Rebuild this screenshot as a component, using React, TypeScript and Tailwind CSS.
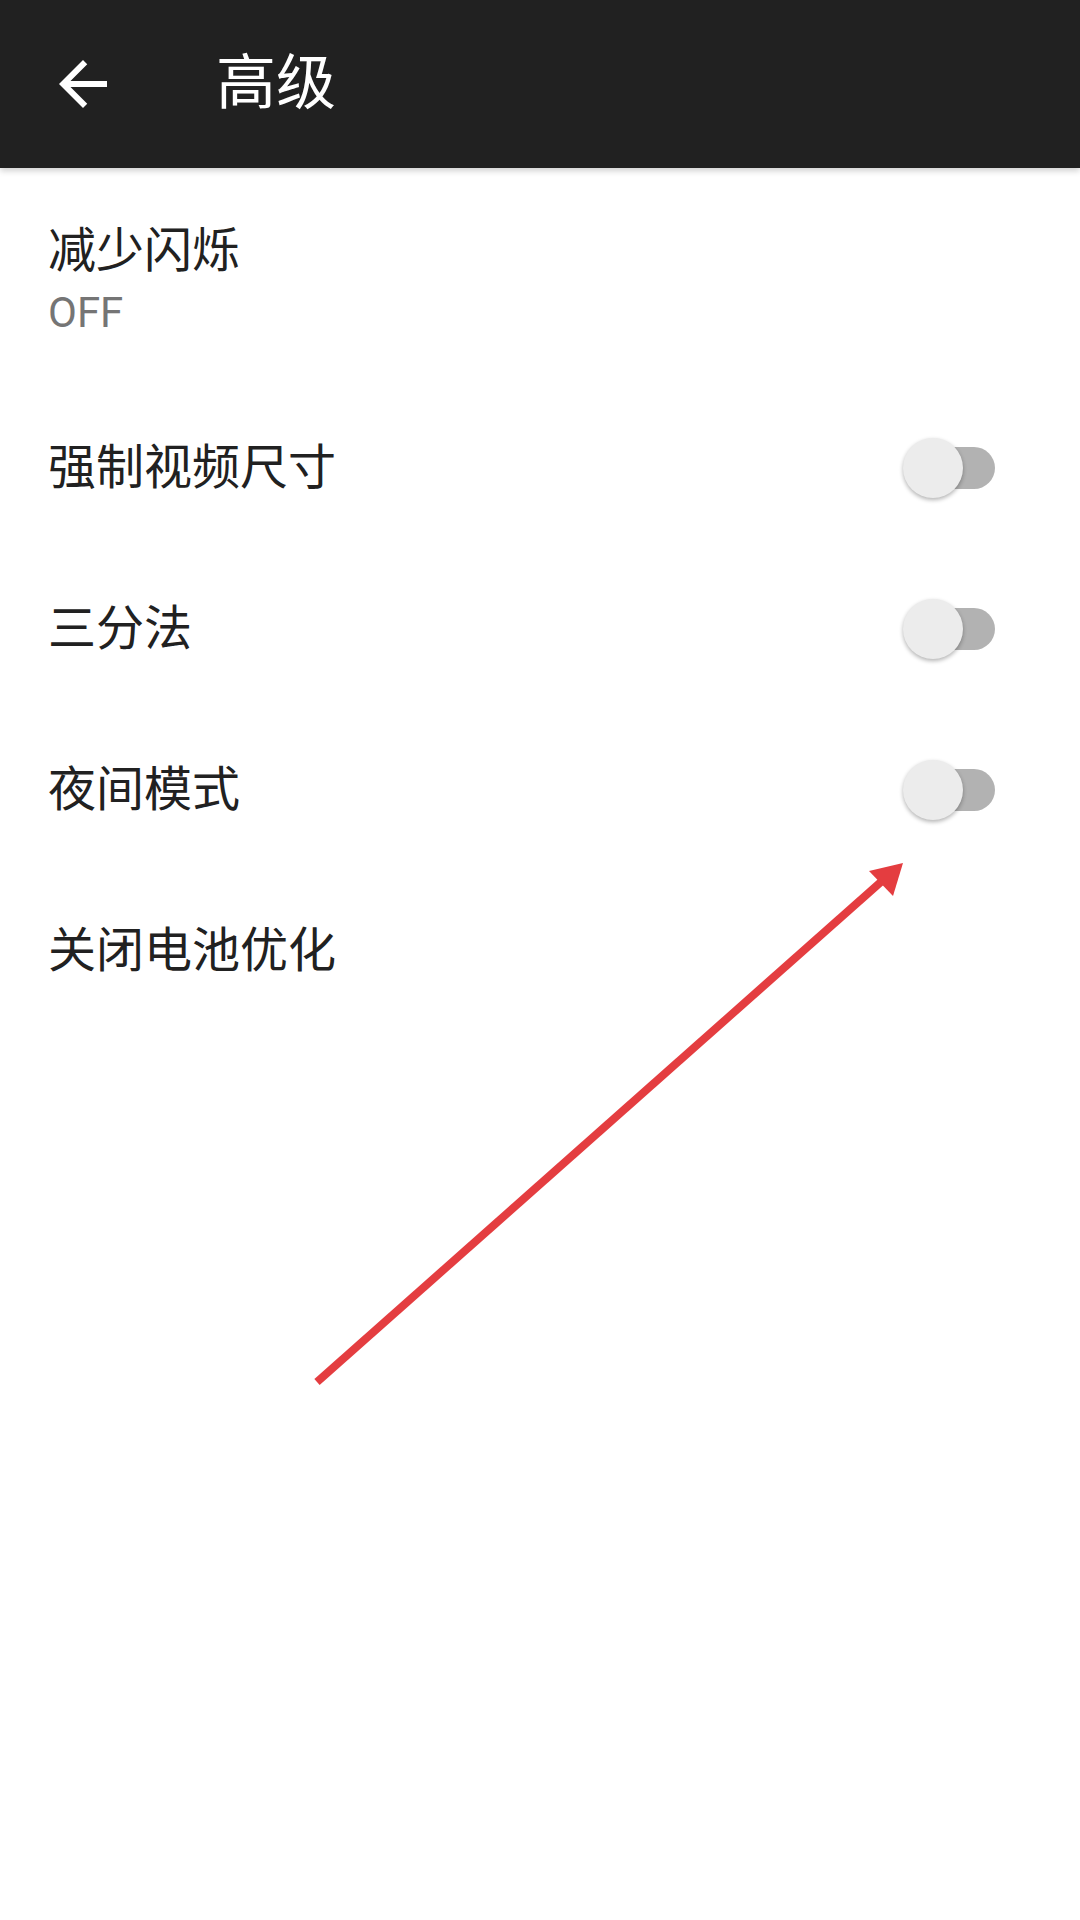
import React from "react"

const font = { fontFamily: "Roboto, 'Noto Sans CJK SC', sans-serif" }

const Toggle = () => (
  <div className="relative w-[92px] h-[60px]">
    <div className="absolute left-[20px] right-0 top-[9px] h-[42px] rounded-full bg-[#b2b2b2]" />
    <div className="absolute left-0 top-0 w-[60px] h-[60px] rounded-full bg-[#ececec] shadow-[0_2px_4px_rgba(0,0,0,0.3)]" />
  </div>
)

const rows = [
  { label: "强制视频尺寸", toggle: true },
  { label: "三分法", toggle: true },
  { label: "夜间模式", toggle: true },
  { label: "关闭电池优化", toggle: false },
]

export default function App() {
  return (
    <div className="relative w-[1080px] h-[1920px] bg-white overflow-hidden" style={font}>
      <header className="relative z-10 h-[168px] bg-[#212121] flex items-center shadow-[0_3px_6px_rgba(0,0,0,0.18)]">
        <div className="w-[72px] h-[72px] ml-[47px]">
          <svg viewBox="0 0 24 24" width="72" height="72" fill="#ffffff">
            <path d="M20 11H7.83l5.59-5.59L12 4l-8 8 8 8 1.41-1.41L7.83 13H20v-2z" />
          </svg>
        </div>
        <h1 className="ml-[97px] text-[60px] leading-none text-white font-normal">高级</h1>
      </header>

      <div className="h-[219px] flex flex-col justify-center pt-[6px] px-[48px]">
        <div className="text-[48px] leading-[64px] text-[#212121]">减少闪烁</div>
        <div className="text-[42px] leading-[60px] text-[#757575]">OFF</div>
      </div>

      {rows.map((r) => (
        <div key={r.label} className="h-[161px] flex items-center justify-between pl-[48px] pr-[85px]">
          <span className="text-[48px] leading-none text-[#212121]">{r.label}</span>
          {r.toggle && <Toggle />}
        </div>
      ))}

      <svg className="absolute inset-0 pointer-events-none" width="1080" height="1920">
        <line x1="317" y1="1382" x2="882" y2="881" stroke="#e43d40" strokeWidth="8" />
        <polygon points="903,863 869,871 893,896" fill="#e43d40" />
      </svg>
    </div>
  )
}
